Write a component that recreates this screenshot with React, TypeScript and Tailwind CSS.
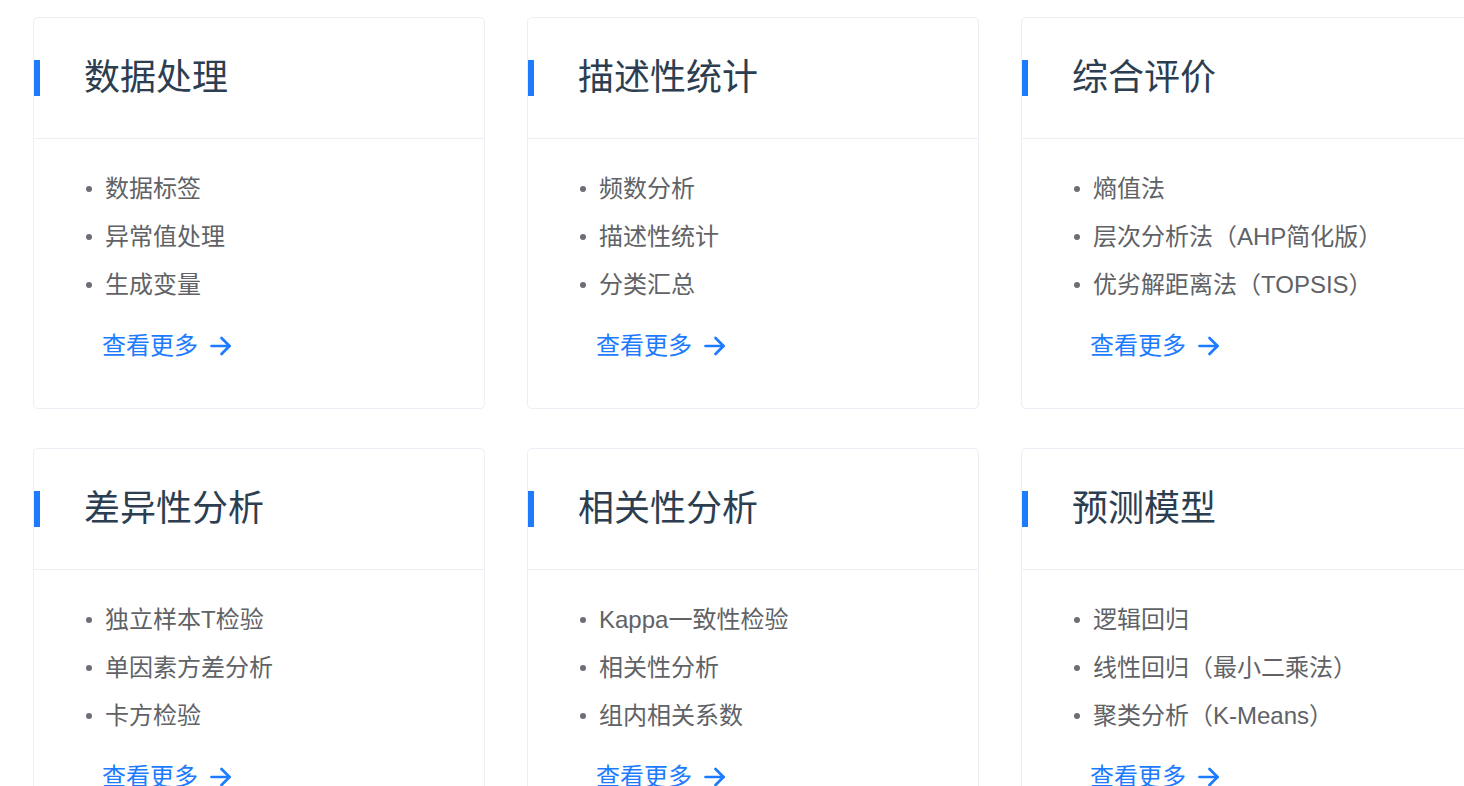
import React from "react";

const cards = [
  { title: "数据处理", items: ["数据标签", "异常值处理", "生成变量"] },
  { title: "描述性统计", items: ["频数分析", "描述性统计", "分类汇总"] },
  { title: "综合评价", items: ["熵值法", "层次分析法（AHP简化版）", "优劣解距离法（TOPSIS）"] },
  { title: "差异性分析", items: ["独立样本T检验", "单因素方差分析", "卡方检验"] },
  { title: "相关性分析", items: ["Kappa一致性检验", "相关性分析", "组内相关系数"] },
  { title: "预测模型", items: ["逻辑回归", "线性回归（最小二乘法）", "聚类分析（K-Means）"] },
];

function Arrow() {
  return (
    <svg width="22" height="22" viewBox="0 0 22 22" fill="none" stroke="#1d7bff" strokeWidth="2.7" strokeLinecap="round" strokeLinejoin="round">
      <path d="M1.5 11h18" />
      <path d="M11.5 3l8 8-8 8" />
    </svg>
  );
}

function Card({ title, items }: { title: string; items: string[] }) {
  return (
    <div className="w-[452px] shrink-0 rounded-[5px] border border-[#ebeef5] bg-white">
      <div className="flex h-[121px] items-center border-b border-[#ebeef5]">
        <div className="h-[36px] w-[6px] bg-[#1d7bff]" />
        <div className="ml-[44px] text-[36px] leading-none text-[#2c3e50]">{title}</div>
      </div>
      <div className="pt-[26px] pb-[50px]">
        <ul>
          {items.map((it) => (
            <li key={it} className="flex h-[48px] items-center text-[24px] text-[#606266]">
              <span className="ml-[52px] h-[6px] w-[6px] rounded-full bg-[#6b6e74]" />
              <span className="ml-[13px] whitespace-nowrap">{it}</span>
            </li>
          ))}
        </ul>
        <div className="mt-[25px] flex h-[24px] items-center pl-[68px] text-[24px] leading-none text-[#1d7bff]">
          <span>查看更多</span>
          <span className="ml-[12px] flex items-center"><Arrow /></span>
        </div>
      </div>
    </div>
  );
}

export default function App() {
  return (
    <div
      className="h-[786px] w-[1464px] overflow-hidden bg-white"
      style={{ fontFamily: '"Liberation Sans", "Noto Sans CJK SC", sans-serif' }}
    >
      <div className="grid w-max grid-cols-[452px_452px_452px] gap-x-[42px] gap-y-[39px] pl-[33px] pt-[17px]">
        {cards.map((c) => (
          <Card key={c.title} title={c.title} items={c.items} />
        ))}
      </div>
    </div>
  );
}
